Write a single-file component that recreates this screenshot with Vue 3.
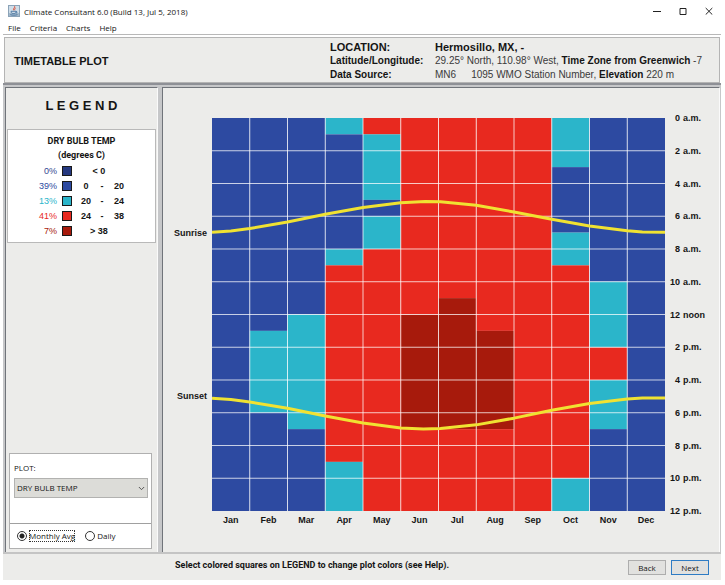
<script setup>
import { ref } from 'vue'

const menus = ['File', 'Criteria', 'Charts', 'Help']

const bands = [
  { key: 'cold', pct: '0%', single: '< 0' },
  { key: 'cool', pct: '39%', from: '0', to: '20' },
  { key: 'mild', pct: '13%', from: '20', to: '24' },
  { key: 'warm', pct: '41%', from: '24', to: '38' },
  { key: 'hot', pct: '7%', single: '> 38' },
]

// Each month lists runs of [band, first hour, last hour].
const months = [
  { name: 'Jan', runs: [['cool', 0, 24]] },
  { name: 'Feb', runs: [['cool', 0, 13], ['mild', 13, 18], ['cool', 18, 24]] },
  { name: 'Mar', runs: [['cool', 0, 12], ['mild', 12, 19], ['cool', 19, 24]] },
  { name: 'Apr', runs: [['mild', 0, 1], ['cool', 1, 8], ['mild', 8, 9], ['warm', 9, 21], ['mild', 21, 24]] },
  { name: 'May', runs: [['warm', 0, 1], ['mild', 1, 5], ['cool', 5, 6], ['mild', 6, 8], ['warm', 8, 24]] },
  { name: 'Jun', runs: [['warm', 0, 12], ['hot', 12, 19], ['warm', 19, 24]] },
  { name: 'Jul', runs: [['warm', 0, 11], ['hot', 11, 19], ['warm', 19, 24]] },
  { name: 'Aug', runs: [['warm', 0, 13], ['hot', 13, 19], ['warm', 19, 24]] },
  { name: 'Sep', runs: [['warm', 0, 24]] },
  { name: 'Oct', runs: [['mild', 0, 3], ['cool', 3, 7], ['mild', 7, 9], ['warm', 9, 22], ['mild', 22, 24]] },
  { name: 'Nov', runs: [['cool', 0, 10], ['mild', 10, 14], ['warm', 14, 16], ['mild', 16, 19], ['cool', 19, 24]] },
  { name: 'Dec', runs: [['cool', 0, 24]] },
]

const hours = [
  ['0', 'a.m.'], ['2', 'a.m.'], ['4', 'a.m.'], ['6', 'a.m.'], ['8', 'a.m.'], ['10', 'a.m.'],
  ['12', 'noon'], ['2', 'p.m.'], ['4', 'p.m.'], ['6', 'p.m.'], ['8', 'p.m.'], ['10', 'p.m.'], ['12', 'p.m.'],
]

// Sun times in hours, from the start of January to the end of December.
const sunrise = [[0, 6.97], [0.5, 6.9], [1, 6.75], [2, 6.35], [3, 5.88], [4, 5.46], [5, 5.17], [5.65, 5.1], [6.05, 5.12], [7, 5.33], [8, 5.74], [9, 6.18], [10, 6.6], [11, 6.89], [11.4, 6.96], [12, 6.97]]
const sunset = [[0, 17.12], [0.5, 17.19], [1, 17.34], [2, 17.73], [3, 18.2], [4, 18.63], [5, 18.93], [5.6, 18.99], [6.05, 18.96], [7, 18.74], [8, 18.33], [9, 17.85], [10, 17.43], [11, 17.16], [11.4, 17.1], [12, 17.1]]
const toPoints = (list) => list.map(([m, h]) => `${m * 100},${h * 100}`).join(' ')

const plot = ref('DRY BULB TEMP')
const mode = ref('monthly')
</script>

<template>
  <div class="window">
    <header class="titlebar">
      <svg class="app-icon" viewBox="0 0 12 12" aria-hidden="true">
        <rect x="0.5" y="0.5" width="11" height="11" fill="#cfdde8" stroke="#8ba3b8" />
        <rect x="1" y="8" width="10" height="3" fill="#a3b9cb" />
        <path d="M6.6 1.2C7.4 2.6 4.6 3.4 5.8 5.4M7.6 3C6.6 3.6 6.4 4.3 6.9 5.2" fill="none" stroke="#d9472f" stroke-width="0.9" />
        <path d="M3 6.3h5.2c0 1.6-.9 2.2-2.6 2.2S3 7.9 3 6.3ZM8.2 6.6c1.5-.2 1.4 1.4-.4 1.4M2.3 9.6c2 .8 5.2.8 7.2 0" fill="none" stroke="#3d6c9c" stroke-width="0.8" />
      </svg>
      <h1 class="app-title">Climate Consultant 6.0 (Build 13, Jul 5, 2018)</h1>
      <div class="window-buttons">
        <button type="button" aria-label="Minimize"><svg viewBox="0 0 8 8"><path d="M0 4.5h8" /></svg></button>
        <button type="button" aria-label="Maximize"><svg viewBox="0 0 8 8"><path d="M1 1.5h6v6h-6z" /></svg></button>
        <button type="button" aria-label="Close"><svg viewBox="0 0 8 8"><path d="M.7 1l6.6 6.6M7.3 1L.7 7.6" /></svg></button>
      </div>
    </header>

    <nav class="menubar">
      <button v-for="m in menus" :key="m" type="button">{{ m }}</button>
    </nav>

    <section class="info">
      <h2 class="plot-title">TIMETABLE PLOT</h2>
      <dl class="facts">
        <dt class="big">LOCATION:</dt>
        <dd class="big">Hermosillo, MX, -</dd>
        <dt>Latitude/Longitude:</dt>
        <dd>29.25° North, 110.98° West, <b>Time Zone from Greenwich</b> -7</dd>
        <dt>Data Source:</dt>
        <dd><span class="code">MN6</span>1095 WMO Station Number, <b>Elevation</b> 220 m</dd>
      </dl>
    </section>

    <main class="body">
      <aside class="side">
        <h2 class="legend-title">L E G E N D</h2>
        <div class="legend">
          <p>DRY BULB TEMP</p>
          <p>(degrees C)</p>
          <ul>
            <li v-for="b in bands" :key="b.key" :class="b.key">
              <span class="pct">{{ b.pct }}</span>
              <button type="button" class="swatch" :aria-label="'Change color for ' + b.pct"></button>
              <span v-if="b.single" class="single">{{ b.single }}</span>
              <template v-else>
                <span>{{ b.from }}</span><span>-</span><span>{{ b.to }}</span>
              </template>
            </li>
          </ul>
        </div>
        <form class="options">
          <div class="plot-choice">
            <label for="plot">PLOT:</label>
            <div class="select-wrap">
              <select id="plot" v-model="plot">
                <option>DRY BULB TEMP</option>
              </select>
              <svg viewBox="0 0 8 5" aria-hidden="true"><path d="M1 .8l3 3 3-3" /></svg>
            </div>
          </div>
          <div class="modes">
            <label><input v-model="mode" type="radio" name="mode" value="monthly" /><span class="focused">Monthly Avg</span></label>
            <label><input v-model="mode" type="radio" name="mode" value="daily" /><span>Daily</span></label>
          </div>
        </form>
      </aside>

      <section class="chart">
        <div class="sun-labels">
          <span class="sunrise">Sunrise</span>
          <span class="sunset">Sunset</span>
        </div>
        <svg class="plot" viewBox="0 0 1200 2400" preserveAspectRatio="none" role="img" aria-label="Dry bulb temperature by month and hour">
          <g v-for="(m, i) in months" :key="m.name">
            <rect v-for="r in m.runs" :key="r[1]" :class="r[0]" :x="i * 100" :y="r[1] * 100" width="100" :height="(r[2] - r[1]) * 100" />
          </g>
          <path v-for="n in 11" :key="'v' + n" class="line" :d="`M${n * 100} 0V2400`" />
          <path v-for="n in 11" :key="'h' + n" class="line" :d="`M0 ${n * 200}H1200`" />
          <polyline class="sun" :points="toPoints(sunrise)" />
          <polyline class="sun" :points="toPoints(sunset)" />
        </svg>
        <ol class="hours">
          <li v-for="(h, i) in hours" :key="i"><span>{{ h[0] }}</span><span>{{ h[1] }}</span></li>
        </ol>
        <ol class="months">
          <li v-for="m in months" :key="m.name">{{ m.name }}</li>
        </ol>
      </section>
    </main>

    <footer class="footer">
      <p>Select colored squares on LEGEND to change plot colors (see Help).</p>
      <button type="button">Back</button>
      <button type="button" class="primary">Next</button>
    </footer>
  </div>
</template>

<style>
body {
  margin: 0;
  background: #fff;
}
</style>

<style scoped>
* {
  box-sizing: border-box;
}

h1, h2, p, dl, dd, ul, ol {
  margin: 0;
  padding: 0;
  list-style: none;
}

button, select, input {
  margin: 0;
  font: inherit;
  color: inherit;
}

.window {
  display: flex;
  flex-direction: column;
  min-height: 100vh;
  padding: 0 4px 5px 3px;
  background: #fff;
  color: #151515;
  font-family: "Liberation Sans", Arial, sans-serif;
  font-size: 9px;
}

.titlebar {
  display: flex;
  align-items: center;
  height: 21px;
  padding: 1px 8px 0 5px;
  font-family: "Open Sans", "Noto Sans", sans-serif;
}

.app-icon {
  width: 12px;
  height: 12px;
  margin-right: 4px;
}

.app-title {
  flex: 1;
  font-size: 8px;
  font-weight: 400;
}

.window-buttons {
  display: flex;
  gap: 18px;
}

.window-buttons button {
  display: flex;
  padding: 0;
  border: 0;
  background: none;
}

.window-buttons svg {
  width: 8px;
  height: 8px;
  fill: none;
  stroke: #222;
}

.menubar {
  display: flex;
  gap: 9px;
  height: 14px;
  padding: 0 5px;
  border-bottom: 1px solid #b8b8b8;
  font-family: "Open Sans", "Noto Sans", sans-serif;
  font-size: 8px;
  line-height: 14px;
}

.menubar button {
  padding: 0;
  border: 0;
  background: none;
}

.info {
  display: grid;
  grid-template-columns: 316px 1fr;
  align-items: center;
  height: 46px;
  margin: 2px 1px 0;
  padding: 2px 0 0 9px;
  border: 1px solid #b4b4b4;
  background: #ececea;
}

.plot-title {
  font-size: 11px;
}

.facts {
  display: grid;
  grid-template-columns: 105px 1fr;
  font-size: 10px;
  line-height: 14px;
  white-space: nowrap;
}

.facts dt, .facts .big {
  font-weight: 700;
}

.facts .big {
  font-size: 11px;
}

.facts dd {
  color: #3a3a3a;
}

.facts dd.big, .facts b {
  color: #151515;
}

.code {
  margin-right: 15px;
}

.body {
  flex: 1;
  display: grid;
  grid-template-columns: 153px 1fr;
  gap: 4px;
  padding: 2px 1px 0 2px;
  border-top: 2px solid #8e9096;
  border-bottom: 2px solid #c4c4c4;
  background: #c6c7c9;
}

.side, .chart {
  border: 1px solid #70747a;
  border-right-color: #fafafa;
  border-bottom: 0;
  background: #ececea;
}

.side {
  display: flex;
  flex-direction: column;
  padding: 0 1px 3px;
}

.legend-title {
  padding: 10px 0 16px;
  font-size: 13px;
  line-height: 15px;
  text-align: center;
}

.legend {
  padding: 4px 0;
  border: 1px solid #b9b9b9;
  background: #fff;
  font-weight: 700;
  line-height: 14px;
  text-align: center;
}

.legend p {
  font-family: Roboto, "Liberation Sans", sans-serif;
}

.legend ul {
  padding-top: 1px;
}

.legend li {
  display: grid;
  grid-template-columns: 49px 20px 18px 14px 20px;
  align-items: center;
  height: 15px;
}

.legend .pct {
  text-align: right;
  font-weight: 400;
}

.swatch {
  justify-self: center;
  width: 10px;
  height: 10px;
  padding: 0;
  border: 1px solid #1a1a1a;
}

.single {
  grid-column: 3 / 6;
  padding-right: 8px;
}

.legend .cold .pct { color: #33478f; }
.legend .cool .pct { color: #2d4aa1; }
.legend .mild .pct { color: #2bb5ca; }
.legend .warm .pct { color: #e8291f; }
.legend .hot .pct { color: #a71a0c; }
.cold .swatch { background: #25387f; }
.cool .swatch { background: #2d4aa1; }
.mild .swatch { background: #2bb5ca; }
.warm .swatch { background: #e8291f; }
.hot .swatch { background: #a71a0c; }

.options {
  margin: auto 4px 0 2px;
  border: 1px solid #b0b0b0;
  background: #fff;
  font-family: "Open Sans", "Noto Sans", sans-serif;
  font-size: 8px;
  line-height: 12px;
}

.plot-choice {
  display: grid;
  gap: 4px;
  padding: 8px 3px 25px 4px;
}

.select-wrap {
  position: relative;
}

.select-wrap select {
  display: block;
  width: 100%;
  height: 20px;
  padding: 0 2px;
  appearance: none;
  border: 1px solid #b2b2b0;
  border-radius: 0;
  background: #dcdcd8;
}

.select-wrap svg {
  position: absolute;
  top: 8px;
  right: 3px;
  width: 7px;
  height: 5px;
  fill: none;
  stroke: #444;
}

.modes {
  display: flex;
  gap: 10px;
  padding: 6px 7px;
  border-top: 1px solid #a0a0a0;
}

.modes label {
  display: flex;
  align-items: center;
  gap: 2px;
}

.modes input {
  width: 10px;
  height: 10px;
  appearance: none;
  border: 1px solid #333;
  border-radius: 50%;
  background: #fff;
}

.modes input:checked {
  background: radial-gradient(circle, #222 0 2px, #fff 3px);
}

.focused {
  outline: 1px dotted #333;
  outline-offset: -1px;
}

.chart {
  display: grid;
  grid-template-columns: 44px 1fr 38px;
  grid-template-rows: minmax(240px, 1fr) 18px;
  padding: 30px 16px 23px 5px;
  font-weight: 700;
}

.sun-labels {
  display: grid;
  grid-template-rows: repeat(24, minmax(0, 1fr));
  align-items: center;
  justify-items: end;
  padding-right: 5px;
  line-height: 10px;
}

.sunrise {
  grid-row: 7 / 9;
}

.sunset {
  grid-row: 17 / 19;
}

.plot {
  display: block;
  contain: size;
  width: 100%;
  height: 100%;
}

.plot .cool { fill: #2d4aa1; }
.plot .mild { fill: #2bb5ca; }
.plot .warm { fill: #e8291f; }
.plot .hot { fill: #a71a0c; }

.plot .line {
  fill: none;
  stroke: #fff;
  stroke-opacity: 0.75;
  vector-effect: non-scaling-stroke;
}

.plot .sun {
  fill: none;
  stroke: #f0e232;
  stroke-width: 3px;
  stroke-linejoin: round;
  vector-effect: non-scaling-stroke;
}

.hours {
  display: flex;
  flex-direction: column;
  justify-content: space-between;
  margin: -6px 0;
  line-height: 12px;
}

.hours li {
  display: grid;
  grid-template-columns: 15px 1fr;
  gap: 3px;
}

.hours span:first-child {
  text-align: right;
}

.months {
  grid-column: 2;
  display: grid;
  grid-template-columns: repeat(12, 1fr);
  line-height: 18px;
  text-align: center;
}

.footer {
  display: flex;
  align-items: center;
  gap: 5px;
  height: 26px;
  padding: 1px 12px 0 172px;
  background: #ececea;
}

.footer p {
  flex: 1;
  margin-bottom: 6px;
  font-family: Roboto, "Liberation Sans", sans-serif;
  font-weight: 700;
}

.footer button {
  width: 38px;
  height: 15px;
  padding: 0;
  border: 1px solid #adadad;
  background: #e1e1df;
  font-family: "Open Sans", "Noto Sans", sans-serif;
  font-size: 8px;
  line-height: 12px;
}

.footer .primary {
  border-color: #2f7cc4;
}
</style>
